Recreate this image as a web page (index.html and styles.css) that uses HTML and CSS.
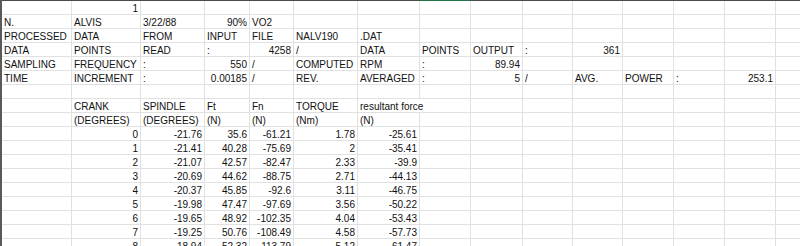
FILE: index.html
```html
<!DOCTYPE html>
<html>
<head>
<meta charset="utf-8">
<link rel="stylesheet" href="styles.css">
</head>
<body>
<div class="sheet">
  <div class="colhead">
    <div></div><div></div><div></div><div></div><div></div><div></div><div></div><div class="sel"></div><div></div><div></div><div></div><div></div><div></div><div></div><div></div>
  </div>
  <div class="grid">
    <div class="row"><div></div><div class="r">1</div><div></div><div></div><div></div><div></div><div></div><div></div><div></div><div></div><div></div><div></div><div></div><div></div><div></div></div>
    <div class="row"><div>N.</div><div>ALVIS</div><div>3/22/88</div><div class="r">90%</div><div>VO2</div><div></div><div></div><div></div><div></div><div></div><div></div><div></div><div></div><div></div><div></div></div>
    <div class="row"><div>PROCESSED</div><div>DATA</div><div>FROM</div><div>INPUT</div><div>FILE</div><div>NALV190</div><div>.DAT</div><div></div><div></div><div></div><div></div><div></div><div></div><div></div><div></div></div>
    <div class="row"><div>DATA</div><div>POINTS</div><div>READ</div><div>:</div><div class="r">4258</div><div>/</div><div>DATA</div><div>POINTS</div><div>OUTPUT</div><div>:</div><div class="r">361</div><div></div><div></div><div></div><div></div></div>
    <div class="row"><div>SAMPLING</div><div>FREQUENCY</div><div>:</div><div class="r">550</div><div>/</div><div>COMPUTED</div><div>RPM</div><div>:</div><div class="r">89.94</div><div></div><div></div><div></div><div></div><div></div><div></div></div>
    <div class="row"><div>TIME</div><div>INCREMENT</div><div>:</div><div class="r">0.00185</div><div>/</div><div>REV.</div><div>AVERAGED</div><div>:</div><div class="r">5</div><div>/</div><div>AVG.</div><div>POWER</div><div>:</div><div class="r">253.1</div><div></div></div>
    <div class="row"><div></div><div></div><div></div><div></div><div></div><div></div><div></div><div></div><div></div><div></div><div></div><div></div><div></div><div></div><div></div></div>
    <div class="row"><div></div><div>CRANK</div><div>SPINDLE</div><div>Ft</div><div>Fn</div><div>TORQUE</div><div class="span2">resultant force</div><div></div><div></div><div></div><div></div><div></div><div></div><div></div></div>
    <div class="row"><div></div><div>(DEGREES)</div><div>(DEGREES)</div><div>(N)</div><div>(N)</div><div>(Nm)</div><div>(N)</div><div></div><div></div><div></div><div></div><div></div><div></div><div></div><div></div></div>
    <div class="row"><div></div><div class="r">0</div><div class="r">-21.76</div><div class="r">35.6</div><div class="r">-61.21</div><div class="r">1.78</div><div class="r">-25.61</div><div></div><div></div><div></div><div></div><div></div><div></div><div></div><div></div></div>
    <div class="row"><div></div><div class="r">1</div><div class="r">-21.41</div><div class="r">40.28</div><div class="r">-75.69</div><div class="r">2</div><div class="r">-35.41</div><div></div><div></div><div></div><div></div><div></div><div></div><div></div><div></div></div>
    <div class="row"><div></div><div class="r">2</div><div class="r">-21.07</div><div class="r">42.57</div><div class="r">-82.47</div><div class="r">2.33</div><div class="r">-39.9</div><div></div><div></div><div></div><div></div><div></div><div></div><div></div><div></div></div>
    <div class="row"><div></div><div class="r">3</div><div class="r">-20.69</div><div class="r">44.62</div><div class="r">-88.75</div><div class="r">2.71</div><div class="r">-44.13</div><div></div><div></div><div></div><div></div><div></div><div></div><div></div><div></div></div>
    <div class="row"><div></div><div class="r">4</div><div class="r">-20.37</div><div class="r">45.85</div><div class="r">-92.6</div><div class="r">3.11</div><div class="r">-46.75</div><div></div><div></div><div></div><div></div><div></div><div></div><div></div><div></div></div>
    <div class="row"><div></div><div class="r">5</div><div class="r">-19.98</div><div class="r">47.47</div><div class="r">-97.69</div><div class="r">3.56</div><div class="r">-50.22</div><div></div><div></div><div></div><div></div><div></div><div></div><div></div><div></div></div>
    <div class="row"><div></div><div class="r">6</div><div class="r">-19.65</div><div class="r">48.92</div><div class="r">-102.35</div><div class="r">4.04</div><div class="r">-53.43</div><div></div><div></div><div></div><div></div><div></div><div></div><div></div><div></div></div>
    <div class="row"><div></div><div class="r">7</div><div class="r">-19.25</div><div class="r">50.76</div><div class="r">-108.49</div><div class="r">4.58</div><div class="r">-57.73</div><div></div><div></div><div></div><div></div><div></div><div></div><div></div><div></div></div>
    <div class="row"><div></div><div class="r">8</div><div class="r">-18.94</div><div class="r">52.32</div><div class="r">-113.79</div><div class="r">5.12</div><div class="r">-61.47</div><div></div><div></div><div></div><div></div><div></div><div></div><div></div><div></div></div>
  </div>
</div>
</body>
</html>
```

FILE: styles.css
```css
html, body {
  margin: 0;
  padding: 0;
  background: #ffffff;
}

.sheet {
  width: 800px;
  height: 246px;
  overflow: hidden;
  font-family: "Liberation Sans", Arial, sans-serif;
  font-size: 10px;
  color: #111;
}

.colhead,
.row {
  display: grid;
  grid-template-columns: 70px 69px 64px 45px 44px 64px 62px 51px 52px 50px 50px 51px 51px 51px 51px;
}

.colhead {
  height: 1px;
  border-left: 2px solid #5a5a5a;
}

.colhead > div {
  background: #4a4a4a;
}

.colhead > .sel {
  background: #217346;
}

.grid {
  border-left: 2px solid #5a5a5a;
}

.row {
  height: 14px;
}

.row > div {
  box-sizing: border-box;
  height: 14px;
  border-right: 1px solid #e1e1e1;
  border-bottom: 1px solid #e1e1e1;
  padding: 0 2px 0 2px;
  line-height: 15px;
  white-space: nowrap;
  overflow: visible;
}

.row > .r {
  text-align: right;
}

.row > .span2 {
  grid-column: span 2;
}
```
